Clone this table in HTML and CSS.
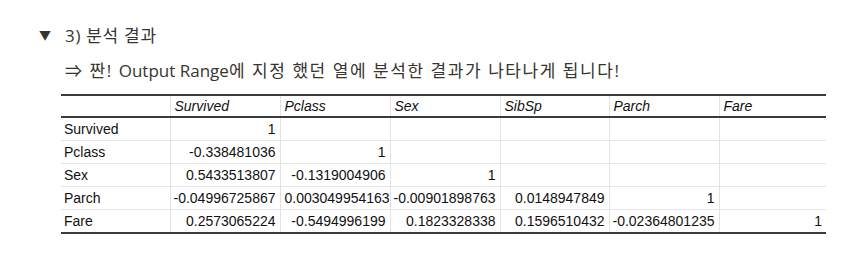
FILE: index.html
```html
<!DOCTYPE html>
<html lang="ko">
<head>
<meta charset="utf-8">
<link rel="stylesheet" href="styles.css">
</head>
<body>
<div class="page">
  <div class="toggle">
    <span class="caret">▼</span>
    <span class="title">3) 분석 결과</span>
  </div>
  <div class="body">
    <p class="note">⇒ 짠! <span class="en">Output Range</span>에 지정 했던 열에 분석한 결과가 나타나게 됩니다!</p>
    <table class="sheet">
      <colgroup>
        <col class="c0"><col class="c1"><col class="c1"><col class="c1"><col class="c0"><col class="c1"><col class="c6">
      </colgroup>
      <thead>
        <tr><th></th><th>Survived</th><th>Pclass</th><th>Sex</th><th>SibSp</th><th>Parch</th><th>Fare</th></tr>
      </thead>
      <tbody>
        <tr><td class="lbl">Survived</td><td>1</td><td></td><td></td><td></td><td></td><td></td></tr>
        <tr><td class="lbl">Pclass</td><td>-0.338481036</td><td>1</td><td></td><td></td><td></td><td></td></tr>
        <tr><td class="lbl">Sex</td><td>0.5433513807</td><td>-0.1319004906</td><td>1</td><td></td><td></td><td></td></tr>
        <tr><td class="lbl">Parch</td><td>-0.04996725867</td><td class="clip">0.003049954163</td><td>-0.00901898763</td><td>0.0148947849</td><td>1</td><td></td></tr>
        <tr><td class="lbl">Fare</td><td>0.2573065224</td><td>-0.5494996199</td><td>0.1823328338</td><td>0.1596510432</td><td>-0.02364801235</td><td>1</td></tr>
      </tbody>
    </table>
  </div>
</div>
</body>
</html>
```
FILE: styles.css
```css
html, body {
  margin: 0;
  padding: 0;
  background: #ffffff;
}
.page {
  padding: 22px 0 0 39px;
  font-family: "Open Sans", "Noto Sans CJK KR", sans-serif;
  color: #37352f;
}
.toggle {
  display: flex;
  align-items: center;
  height: 27px;
}
.caret {
  width: 26px;
  font-size: 12px;
  line-height: 1;
  color: #37352f;
}
.title {
  font-size: 17px;
  line-height: 26px;
  letter-spacing: 0.7px;
}
.body {
  padding-left: 26px;
}
.note {
  margin: 9px 0 0 0;
  font-size: 17px;
  line-height: 26px;
  letter-spacing: 1.55px;
}
.note .en {
  letter-spacing: 0;
}
.sheet {
  margin: 10px 0 0 -4px;
  border-collapse: collapse;
  table-layout: fixed;
  width: 765px;
  font-family: "Liberation Sans", Arial, sans-serif;
  font-size: 14px;
  color: #111;
}
.c0 { width: 109px; }
.c1 { width: 110px; }
.c6 { width: 107px; }
.sheet thead th {
  font-style: italic;
  font-weight: normal;
  text-align: left;
  height: 20px;
  padding: 0 4px;
  border-top: 2px solid #3a3a3a;
  border-bottom: 2px solid #3a3a3a;
  border-left: 1px solid #e2e2e2;
}
.sheet thead th:first-child { border-left: none; }
.sheet td {
  height: 22px;
  padding: 0 4px 0 2px;
  text-align: right;
  white-space: nowrap;
  overflow: hidden;
  border-bottom: 1px solid #e6e6e6;
  border-left: 1px solid #e2e2e2;
}
.sheet td.lbl {
  text-align: left;
  border-left: none;
  padding-left: 3px;
}
.sheet td.clip {
  text-align: left;
  padding-left: 4px;
  padding-right: 0;
  text-overflow: clip;
}
.sheet tbody tr:last-child td {
  border-bottom: 2px solid #3a3a3a;
}
```
